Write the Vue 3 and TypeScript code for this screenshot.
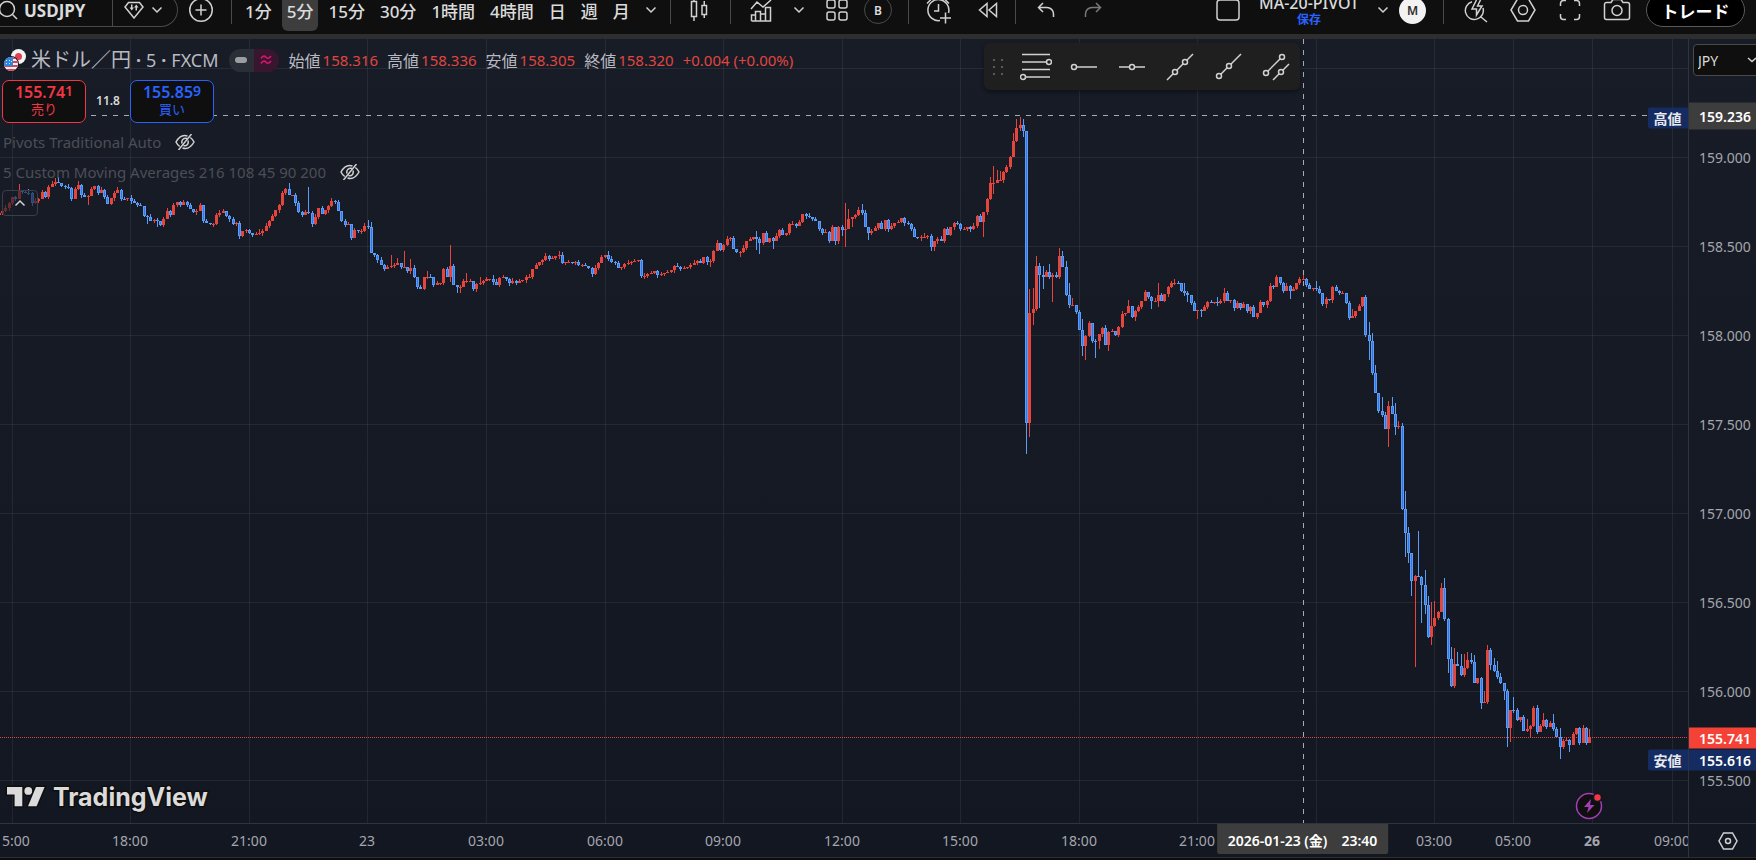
<script setup lang="ts">
import { ref } from 'vue'

interface Block {
  base: number
  bars: string
}

interface Shape {
  upBody: string
  upCore: string
  upWick: string
  downBody: string
  downCore: string
  downWick: string
}

const VIEW_W = 1688
const VIEW_H = 784
const VIEW_TOP = 39
const FIRST_X = 12.5
const STEP = 3.2927

// Each bar is close[^wick top][_wick bottom], counted downwards in thirds of a chart unit.
const blocks: Block[] = [
  {
    base: 510,
    bars: `128 124 114 100 82 86 62^42 66 68 70^58 100 93 86 66 80^64 50 42 36^25 40^22 48 50 54 86 56 46^34 76 80 78_104 56
    48 68 60 82 102 84 68 60 86 88 84 94^74 98 104 108 138 140_163 152 150 154_170 164 146 122 136 106 96 104^94 96^90 106
    118^100 126 122 106 152 160 162 162 136 128^120 122 138 148 162 158 198_208 182 180 190^176 196 192 190^178 182 168
    152 138 120 106 70 56^54 74^40 74 100 126 136 126 128^52 162 140 115 132^108 120 108 92 96 124 152 164 163 204 180
    184 184^176 168 170^150 250^156 256 270 284 298 290 287^255 284 280^264 290 290^243 304 294^266 322 350 356 320
    320^304 322 344 340`,
  },
  {
    base: 600,
    bars: `248 208 230 198^135_245 255 260_278 260_278 244 244^220 244 268 252 250^230 242 238 236 246^225 254 234 230 238 250
    242 250 243 241 230 230 208 194 187 180 167 176 175 168 165^154 190 187 186 187 187 196 194 197 204 222 204 188 171
    165 176^154 186 190 205 200 193 189 185 182 180 227 227_237 221 218 213 226 223 220 216 211 198 200 207 204 200 194
    189 182 188 172 187 184_201 153 130^121 149 135 116 114 146 156 156_170 143 124 116 110 118^94_150 128_162 100 125
    115 122_146 108 90 104 98 73 71 77 66 43 48 52 57 63 88 98 95 122 82 124_134 82 90_108 88^8_140 58^28 50_80 45 30^22
    40^12 80^30 98_120 92 85 70 88 60 88 77 70 65 54 70 72 86 112 114 110 110^98 108 142_152 124_152 116`,
  },
  {
    base: 300,
    bars: `422 386 404 382 370 372 388 388 382 388 377 348 365 336_412 298 250^232 250^198_282 240^210 240^214 216 202 170
    122^98 84^58 76^50 94^56_110 970_1062 638^566_1010 626^565_675 498^468 524_625 530^498_566 516 532^492 524_606 532
    468^445 502^454 584^484 616^550 616^595 636 690 738^658_768 708_780 670 722 724_774 702_746 684 734 695_752 694 704
    682 642 640 618^600 650 634_662 622 604 576 592 602_626 602 586^550_620 602 582 562 550 548^538 550 572 580^548
    586_606 610 634 630_656 632_650 622 606 608 606 610^592 604 578^564 604 600 624 610 624 612 634 622 650 640`,
  },
  {
    base: 750,
    bars: `157 166 154 108 112 82 100 122 108 122_146 116 98 86 86^75 106 118 115 116^92 130 162 148_174 150 112 122 130 130
    158 203 198^178 184 168 140 254 274^216_330 368^250 430^345 484 494^440 536 468^452_590 492^440 530^460_555 528^514
    778 850^724_920 910^832_938`,
  },
  {
    base: 1440,
    bars: `302_348 288_560 290^154 316_428 376^270_402 470^348 438^366_494 414^362 396 324^310 418^294 536_578 618^500 552^504
    558^516 584^522 565^522 540^516 546^518 608^524 595 668_686 667^632 510^494 556_570 572^534 590^544 610^578 634_660
    744_800 690_786 691^652 720 712 752 748^716 738_774 685 756^675 738 720^700 740 730 746^702 772 800^744_836 782 780
    794_816 762 744 788 744 788 772^748`,
  },
]

function buildShape(): Shape {
  const s: Shape = { upBody: '', upCore: '', upWick: '', downBody: '', downCore: '', downWick: '' }
  let index = -4
  let previous = 644
  for (const block of blocks) {
    for (const token of block.bars.trim().split(/\s+/)) {
      const match = /^(\d+)(?:\^(\d+))?(?:_(\d+))?$/.exec(token)
      if (!match) continue
      const close = block.base + Number(match[1])
      const open = previous
      const top = Math.min(open, close)
      const bottom = Math.max(open, close)
      const seed = Math.abs(index * 7) % 5
      const high = match[2] ? block.base + Number(match[2]) : top - seed * 2
      const low = match[3] ? block.base + Number(match[3]) : bottom + ((seed + 2) % 5) * 2
      const x = Math.floor(FIRST_X + index * STEP)
      const y0 = Math.round(top / 3)
      const h = Math.max(1, Math.round(bottom / 3) - y0)
      const w0 = Math.round(Math.min(high, top) / 3)
      const wh = Math.max(1, Math.round(Math.max(low, bottom) / 3) - w0)
      const body = `M${x - 1} ${y0}h3v${h}h-3z`
      const core = h > 2 ? `M${x} ${y0 + 1}h1v${h - 2}h-1z` : ''
      const wick = `M${x} ${w0}h1v${wh}h-1z`
      if (close <= open) {
        s.upBody += body
        s.upCore += core
        s.upWick += wick
      } else {
        s.downBody += body
        s.downCore += core
        s.downWick += wick
      }
      previous = close
      index += 1
    }
  }
  return s
}

const shape = buildShape()

const priceTicks = [
  { label: '159.000', y: 157 },
  { label: '158.500', y: 246 },
  { label: '158.000', y: 335 },
  { label: '157.500', y: 424 },
  { label: '157.000', y: 513 },
  { label: '156.500', y: 602 },
  { label: '156.000', y: 691 },
  { label: '155.500', y: 780 },
]

const timeTicks = [
  { label: '15:00', x: 12, strong: false },
  { label: '18:00', x: 130, strong: false },
  { label: '21:00', x: 249, strong: false },
  { label: '23', x: 367, strong: false },
  { label: '03:00', x: 486, strong: false },
  { label: '06:00', x: 605, strong: false },
  { label: '09:00', x: 723, strong: false },
  { label: '12:00', x: 842, strong: false },
  { label: '15:00', x: 960, strong: false },
  { label: '18:00', x: 1079, strong: false },
  { label: '21:00', x: 1197, strong: false },
  { label: '', x: 1316, strong: false },
  { label: '03:00', x: 1434, strong: false },
  { label: '05:00', x: 1513, strong: false },
  { label: '26', x: 1592, strong: true },
  { label: '09:00', x: 1672, strong: false },
]

const gridPath =
  [68, ...priceTicks.map((t) => t.y)].map((y) => `M0 ${y}.5H${VIEW_W}`).join('') +
  timeTicks.map((t) => `M${t.x}.5 ${VIEW_TOP}V${VIEW_TOP + VIEW_H}`).join('')

const topPct = (y: number): string => `${((y - VIEW_TOP) / VIEW_H) * 100}%`
const leftPct = (x: number): string => `${(x / VIEW_W) * 100}%`

const intervals = ['1分', '5分', '15分', '30分', '1時間', '4時間', '日', '週', '月']
const active = ref('5分')

const ohlc = [
  { name: '始値', value: '158.316' },
  { name: '高値', value: '158.336' },
  { name: '安値', value: '158.305' },
  { name: '終値', value: '158.320' },
]

const indicators = ['Pivots Traditional Auto', '5 Custom Moving Averages 216 108 45 90 200']
const currency = ref('JPY')
</script>

<template>
  <div class="app">
    <header class="toolbar">
      <div class="symbol-pill">
        <button class="symbol" type="button">
          <svg width="18" height="20" viewBox="0 0 18 20" class="ico"><circle cx="7" cy="9" r="7.5" /><path d="M12.500 14.500L17 19" /></svg>
          <span>USDJPY</span>
        </button>
        <button class="gem" type="button" aria-label="ウォッチリスト">
          <svg width="20" height="18" viewBox="0 0 20 18" class="ico"><path d="M4.500 1.500h11L19 6l-9 11L1 6z" /><path class="solid" d="M7 3.500h1.500v3H10L7.750 9.500 5.500 6.500H7zM11.500 9.500H13v-3h1.500L12.250 3.500 10 6.500h1.500z" /></svg>
          <svg width="12" height="8" viewBox="0 0 12 8" class="ico"><path d="M1.500 1.500L6 6l4.500-4.500" /></svg>
        </button>
      </div>
      <button class="plus" type="button" aria-label="追加">
        <svg width="24" height="24" viewBox="0 0 24 24" class="ico"><circle cx="12" cy="12" r="11.250" /><path d="M12 6.500v11M6.500 12h11" /></svg>
      </button>
      <i class="sep"></i>
      <nav class="intervals">
        <button v-for="item in intervals" :key="item" type="button" :class="{ on: item === active }" @click="active = item">{{ item }}</button>
      </nav>
      <button class="chev slim" type="button" aria-label="時間足"><svg width="12" height="8" viewBox="0 0 12 8" class="ico"><path d="M1.500 1.500L6 6l4.500-4.500" /></svg></button>
      <i class="sep"></i>
      <button class="tool" type="button" aria-label="ローソク足">
        <svg width="18" height="26" viewBox="0 0 18 26" class="ico"><path d="M1.500 4.500h5v15h-5zM4 1v3.500M4 19.500V24M12 8.500h4.500v9H12zM14.250 4v4.500M14.250 17.500V21" /></svg>
      </button>
      <i class="sep"></i>
      <button class="tool wide" type="button" aria-label="インジケーター">
        <svg width="24" height="26" viewBox="0 0 24 26" class="ico"><path d="M2.500 24v-6h4v6M6.500 24V14.500h5V24M11.500 24v-7h5v7M16.500 24V10.500h5V24zM2.500 24h14M2 12l6-7 6 5 8-7" /></svg>
      </button>
      <button class="chev" type="button" aria-label="お気に入り"><svg width="12" height="8" viewBox="0 0 12 8" class="ico"><path d="M1.500 1.500L6 6l4.500-4.500" /></svg></button>
      <button class="tool wide" type="button" aria-label="テンプレート">
        <svg width="22" height="22" viewBox="0 0 22 22" class="ico"><rect x="1" y="1" width="8" height="8" rx="2" /><rect x="13" y="1" width="8" height="8" rx="2" /><rect x="1" y="13" width="8" height="8" rx="2" /><rect x="13" y="13" width="8" height="8" rx="2" /></svg>
      </button>
      <button class="badge" type="button">B</button>
      <i class="sep"></i>
      <button class="tool wide" type="button" aria-label="アラート">
        <svg width="28" height="28" viewBox="0 0 28 28" class="ico"><path d="M15 24.500a10.500 10.500 0 1 1 8.500-7.500M13.500 8v7H9M2 7.500l4-4M20 3.500l4 4M20.500 16.500v11M15 22h11" /></svg>
      </button>
      <button class="rewind" type="button" aria-label="リプレイ">
        <svg width="20" height="16" viewBox="0 0 20 16" class="ico"><path d="M9 1.500v13L1.500 8zM18.500 1.500v13L11 8z" /></svg>
      </button>
      <i class="sep"></i>
      <button class="tool wide" type="button" aria-label="元に戻す">
        <svg width="18" height="16" viewBox="0 0 18 16" class="ico"><path d="M6 1L1.500 5.500 6 10M1.500 5.500H10a6.500 6.500 0 0 1 6.500 6.500v3" /></svg>
      </button>
      <button class="redo" type="button" aria-label="やり直す">
        <svg width="18" height="16" viewBox="0 0 18 16" class="ico"><path d="M12 1l4.500 4.500L12 10M16.500 5.500H8A6.500 6.500 0 0 0 1.500 12v3" /></svg>
      </button>
      <span class="spacer"></span>
      <button class="square" type="button" aria-label="レイアウト">
        <svg width="24" height="22" viewBox="0 0 24 22" class="ico"><rect x="1" y="1" width="22" height="20" rx="3" /></svg>
      </button>
      <button class="layout" type="button"><span>MA-20-PIVOT</span><small>保存</small></button>
      <button class="chev" type="button" aria-label="レイアウト管理"><svg width="12" height="8" viewBox="0 0 12 8" class="ico"><path d="M1.500 1.500L6 6l4.500-4.500" /></svg></button>
      <button class="avatar" type="button">M</button>
      <i class="sep"></i>
      <div class="tools-right">
        <button type="button" aria-label="クイック検索">
          <svg width="24" height="26" viewBox="0 0 24 26" class="ico"><path d="M8 4.800a9 9 0 1 0 11 6.200M17 20l6 5M12.500 3L8 12h4.500v6L18 9h-4.500l3-6" /></svg>
        </button>
        <button type="button" aria-label="設定">
          <svg width="26" height="24" viewBox="0 0 26 24" class="ico"><path d="M7.500 1h11L25 12l-6.500 11h-11L1 12z" /><circle cx="13" cy="12" r="4.500" /></svg>
        </button>
        <button type="button" aria-label="全画面">
          <svg width="22" height="22" viewBox="0 0 22 22" class="ico"><path d="M1.500 7V4.500a3 3 0 0 1 3-3H7M15 1.500h2.500a3 3 0 0 1 3 3V7M20.500 15v2.500a3 3 0 0 1-3 3H15M7 20.500H4.500a3 3 0 0 1-3-3V15" /></svg>
        </button>
        <button type="button" aria-label="スナップショット">
          <svg width="28" height="24" viewBox="0 0 28 24" class="ico"><path d="M3.500 4.500H8l2-3h8l2 3h4.500a2 2 0 0 1 2 2v13a2 2 0 0 1-2 2h-21a2 2 0 0 1-2-2v-13a2 2 0 0 1 2-2z" /><circle cx="14" cy="12.500" r="5" /></svg>
        </button>
      </div>
      <button class="trade" type="button">トレード</button>
    </header>

    <main class="workspace">
      <section class="chart">
        <svg class="plot" :viewBox="`0 ${VIEW_TOP} ${VIEW_W} ${VIEW_H}`" preserveAspectRatio="none" aria-hidden="true">
          <path class="grid-lines" :d="gridPath" />
          <path class="price-line" d="M0 737.500H1688" />
          <path class="down" :d="shape.downWick" />
          <path class="up" :d="shape.upWick" />
          <path class="down" :d="shape.downBody" />
          <path class="up" :d="shape.upBody" />
          <path class="down-core" :d="shape.downCore" />
          <path class="up-core" :d="shape.upCore" />
          <path class="cross" stroke-dashoffset="-3" d="M0 115.500H1688" />
          <path class="cross" d="M1303.500 39V823" />
        </svg>

        <div class="legend">
          <div class="title-row">
            <svg class="flags" width="22" height="22" viewBox="0 0 22 22">
              <circle cx="14.500" cy="7.500" r="7.500" fill="#f4f4f6" />
              <circle cx="14.500" cy="7.500" r="3.500" fill="#e0414e" />
              <circle cx="7" cy="15" r="8" fill="#161a25" />
              <clipPath id="us"><circle cx="7" cy="15" r="7" /></clipPath>
              <g clip-path="url(#us)">
                <path fill="#f4f4f6" d="M0 8h14v14H0z" />
                <path fill="#d94452" d="M0 8h14v2H0zM0 12h14v2H0zM0 16h14v2H0zM0 20h14v2H0z" />
                <path fill="#2f86dd" d="M0 8h9v9H0z" />
                <path fill="#cfe4fa" d="M2 11h1v1H2zM5 11h1v1H5zM2 14h1v1H2zM5 14h1v1H5zM7 12h1v1H7z" />
              </g>
            </svg>
            <h1><span class="jp">米ドル／円</span><b class="dot">·</b><span>5</span><b class="dot">·</b><span>FXCM</span></h1>
            <span class="pills">
              <span class="pill-a"><i></i></span>
              <span class="pill-b"><svg width="12" height="12" viewBox="0 0 12 12"><path d="M1 4.500C3 1 5 2 6 3.200s3 1.800 5-1.200M1 9.500C3 6 5 7 6 8.200S9 10 11 7" fill="none" stroke="#d3146c" stroke-width="1.600" /></svg></span>
            </span>
            <dl class="ohlc">
              <div v-for="v in ohlc" :key="v.name"><dt>{{ v.name }}</dt><dd>{{ v.value }}</dd></div>
            </dl>
            <span class="change">+0.004 (+0.00%)</span>
          </div>
          <div class="quotes">
            <button class="sell" type="button"><b>155.74<sup>1</sup></b><span>売り</span></button>
            <span class="spread">11.8</span>
            <button class="buy" type="button"><b>155.85<sup>9</sup></b><span>買い</span></button>
          </div>
          <div v-for="name in indicators" :key="name" class="indicator">
            <span>{{ name }}</span>
            <button type="button" aria-label="表示">
              <svg width="20" height="16" viewBox="0 0 20 16" class="ico"><path d="M12.500 2C8 .5 4 2.500 1 8c1 2 2.200 3.500 3.700 4.500M7.500 14c4.500 1.500 8.500-.5 11.500-6-1-2-2.200-3.500-3.700-4.500M16.500 0L3.500 16M12 4.500C9 3.500 6 6 7 9.500M8.500 11.500c3 1 5.500-1.500 4.500-5" /></svg>
            </button>
          </div>
          <button class="collapse" type="button" aria-label="折りたたむ">
            <svg width="12" height="8" viewBox="0 0 12 8" class="ico"><path d="M1.500 6.500L6 2l4.500 4.500" /></svg>
          </button>
        </div>

        <div class="draw-bar">
          <svg width="12" height="18" viewBox="0 0 12 18" class="grip"><path d="M1 1h2v2H1zM9 1h2v2H9zM1 8h2v2H1zM9 8h2v2H9zM1 15h2v2H1zM9 15h2v2H9z" /></svg>
          <button type="button" aria-label="フィボナッチ"><svg width="32" height="28" viewBox="0 0 32 28" class="ico"><path d="M2 1.500h28M2 9h24.500M2 16.500h28M5.500 24H30" /><circle cx="29" cy="9" r="2.500" /><circle cx="3" cy="24" r="2.500" /></svg></button>
          <button type="button" aria-label="水平レイ"><svg width="28" height="28" viewBox="0 0 28 28" class="ico"><circle cx="4" cy="14" r="2.500" /><path d="M6.500 14H27" /></svg></button>
          <button type="button" aria-label="水平線"><svg width="28" height="28" viewBox="0 0 28 28" class="ico"><circle cx="14" cy="14" r="2.500" /><path d="M1 14h10.500M16.500 14H27" /></svg></button>
          <button type="button" aria-label="延長線"><svg width="28" height="28" viewBox="0 0 28 28" class="ico"><circle cx="9" cy="19" r="2.500" /><circle cx="19" cy="9" r="2.500" /><path d="M1 27l6.200-6.200M10.800 17.200l6.400-6.400M20.800 7.200L27 1" /></svg></button>
          <button type="button" aria-label="レイ"><svg width="28" height="28" viewBox="0 0 28 28" class="ico"><circle cx="5" cy="23" r="2.500" /><circle cx="15" cy="13" r="2.500" /><path d="M6.800 21.200l6.400-6.400M16.800 11.200L27 1" /></svg></button>
          <button type="button" aria-label="平行チャネル"><svg width="28" height="28" viewBox="0 0 28 28" class="ico"><circle cx="4" cy="20" r="2.500" /><circle cx="20" cy="4" r="2.500" /><circle cx="19" cy="19" r="2.500" /><path d="M5.800 18.200L18.200 5.800M11 27l6.200-6.200M20.800 17.200L27 11" /></svg></button>
        </div>

        <div class="brand">
          <svg width="38" height="20" viewBox="0 0 38 20"><path d="M0 0h15.300v19.300H7.600V7.600H0z" /><circle cx="21.300" cy="3.900" r="3.900" /><path d="M29 0h8.600l-8 19.300H21z" /></svg>
          <span>TradingView</span>
        </div>

        <span class="level-tag" :style="{ top: topPct(117.5) }">高値</span>
        <span class="level-tag" :style="{ top: topPct(759.5) }">安値</span>

        <button class="news" type="button" aria-label="ニュース" :style="{ left: leftPct(1589), top: topPct(806) }">
          <svg width="28" height="28" viewBox="0 0 28 28"><circle cx="14" cy="14" r="12.500" fill="#0f0f0f" stroke="#a63db8" stroke-width="1.500" /><path d="M16 7l-7 8h4.500L12 21l7.500-8H15z" fill="#a63db8" /><circle cx="22.500" cy="5.500" r="5" fill="#131722" /><circle cx="22.500" cy="5.500" r="3.200" fill="#f23645" /></svg>
        </button>
      </section>

      <aside class="price-axis">
        <div class="currency">
          <select v-model="currency" aria-label="通貨"><option>JPY</option><option>USD</option></select>
          <svg width="12" height="8" viewBox="0 0 12 8" class="ico"><path d="M2 2l4 3.500L10 2" /></svg>
        </div>
        <span v-for="t in priceTicks" :key="t.label" class="tick" :style="{ top: topPct(t.y) }">{{ t.label }}</span>
        <span class="tick mark cursor" :style="{ top: topPct(115.5) }">159.236</span>
        <span class="tick mark low" :style="{ top: topPct(759.5) }">155.616</span>
        <span class="tick mark last" :style="{ top: topPct(737.5) }">155.741</span>
      </aside>

      <div class="time-axis">
        <span v-for="t in timeTicks" :key="t.x" class="time" :class="{ strong: t.strong }" :style="{ left: leftPct(t.x) }">{{ t.label }}</span>
        <span class="cursor-time" :style="{ left: leftPct(1302.5) }"><span>2026-01-23 (金)</span><span>23:40</span></span>
      </div>

      <button class="axis-settings" type="button" aria-label="スケール設定">
        <svg width="20" height="18" viewBox="0 0 20 18" class="ico"><path d="M5.500 1h9L19 9l-4.500 8h-9L1 9z" /><circle cx="10" cy="9" r="2.500" /></svg>
      </button>
    </main>
  </div>
</template>

<style>
html,
body {
  margin: 0;
  background: #0c0c0d;
}
</style>

<style scoped>
.app {
  display: flex;
  flex-direction: column;
  height: 100vh;
  min-height: 480px;
  overflow: hidden;
  box-sizing: border-box;
  border-bottom: 2px solid #0c0c0d;
  color: #dbdbdb;
  font-family: "Noto Sans", "Noto Sans CJK JP", sans-serif;
  font-size: 15px;
}
.app * {
  box-sizing: border-box;
}
button {
  display: flex;
  align-items: center;
  justify-content: center;
  flex: none;
  margin: 0;
  padding: 0;
  border: 0;
  background: none;
  color: inherit;
  font: inherit;
  white-space: nowrap;
  cursor: pointer;
}
svg {
  display: block;
  flex: none;
}
.ico {
  fill: none;
  stroke: #d1d1d1;
  stroke-width: 1.5;
}
.solid {
  fill: #d1d1d1;
  stroke: none;
}

.toolbar {
  display: flex;
  align-items: center;
  flex: none;
  height: 39px;
  padding-bottom: 14px;
  overflow: hidden;
  background: #0f0f0f;
  border-bottom: 5px solid #2e2e2e;
}
.symbol-pill {
  display: flex;
  flex: none;
  height: 34px;
  width: 178px;
  border: 1px solid #4a4a4a;
  border-left: 0;
  border-radius: 0 17px 17px 0;
}
.symbol {
  width: 113px;
  justify-content: flex-start;
  gap: 6px;
  border-right: 1px solid #4a4a4a;
  font-size: 17px;
  font-weight: 700;
}
.gem {
  flex: 1;
  gap: 7px;
  padding-right: 3px;
}
.plus {
  width: 38px;
  margin-left: 4px;
}
.sep {
  flex: none;
  width: 1px;
  height: 28px;
  background: #4a4a4a;
  margin: 0 8px 0 11px;
}
.intervals {
  display: flex;
  flex: none;
  align-items: center;
  gap: 5px;
}
.intervals button {
  height: 42px;
  padding: 0 5px;
  border-radius: 6px;
  font-size: 17px;
  font-weight: 500;
}
.intervals .on {
  background: #3d3d3d;
}
.chev {
  width: 32px;
}
.slim {
  width: 16px;
  margin-left: 8px;
}
.tool {
  width: 40px;
}
.wide {
  width: 44px;
}
.badge {
  width: 28px;
  height: 28px;
  margin: 0 5px;
  border: 1px solid #4a4a4a;
  border-radius: 50%;
  font-size: 12px;
  font-weight: 600;
}
.rewind {
  width: 32px;
  margin-left: 11px;
}
.redo {
  width: 46px;
  margin-left: 2px;
  opacity: 0.55;
}
.spacer {
  flex: 1;
}
.square {
  width: 36px;
}
.layout {
  flex-direction: column;
  width: 110px;
  margin: 0 3px 0 8px;
  font-size: 16px;
  font-weight: 500;
  line-height: 20px;
}
.layout small {
  color: #2962ff;
  font-size: 12px;
  font-weight: 700;
  line-height: 14px;
}
.avatar {
  width: 27px;
  height: 27px;
  margin-right: 6px;
  border-radius: 50%;
  background: #f2f2f2;
  color: #2e2e2e;
  font-size: 12px;
  font-weight: 600;
}
.tools-right {
  display: flex;
  flex: none;
  margin-right: 6px;
}
.tools-right button {
  width: 47px;
}
.trade {
  width: 99px;
  height: 34px;
  margin-right: 11px;
  border: 1px solid #5a5a5a;
  border-radius: 17px;
  background: #000;
  color: #fff;
  font-size: 17px;
  font-weight: 700;
}

.workspace {
  display: grid;
  grid-template: minmax(0, 1fr) 34px / minmax(0, 1fr) 68px;
  flex: 1;
  min-height: 0;
  background: linear-gradient(#181c27, #131722);
  border-bottom: 1px solid #2e2e2e;
}
.chart {
  position: relative;
  min-width: 0;
  overflow: hidden;
}
.plot {
  position: absolute;
  inset: 0;
  width: 100%;
  height: 100%;
}
.grid-lines {
  fill: none;
  stroke: #f0f3fa;
  stroke-opacity: 0.07;
}
.up {
  fill: #e8443c;
}
.up-core {
  fill: #d84a42;
}
.down {
  fill: #5b9cf6;
}
.down-core {
  fill: #3577e8;
}
.price-line {
  stroke: #d84a46;
  stroke-dasharray: 1 1;
}
.cross {
  fill: none;
  stroke: #a9abb2;
  stroke-dasharray: 5 6;
}

.legend {
  position: relative;
  display: flex;
  flex-direction: column;
  align-items: flex-start;
  padding: 6px 0 0 2px;
}
.title-row {
  display: flex;
  align-items: center;
  height: 30px;
}
.flags {
  margin: 0 5px 0 2px;
}
h1 {
  display: flex;
  align-items: center;
  gap: 5px;
  margin: 0;
  color: #b8bac1;
  font-size: 18px;
  font-weight: 400;
  line-height: 28px;
  white-space: nowrap;
}
.jp {
  font-size: 20px;
}
.dot {
  width: 5px;
  text-align: center;
  font-weight: 700;
}
.pills {
  display: flex;
  height: 23px;
  margin: 0 10px;
  border-radius: 12px;
  overflow: hidden;
}
.pill-a,
.pill-b {
  display: flex;
  align-items: center;
  justify-content: center;
  width: 25px;
}
.pill-a {
  background: #2a2e37;
}
.pill-a i {
  width: 12px;
  height: 6px;
  border-radius: 3px;
  background: #9b9da3;
}
.pill-b {
  background: #38162f;
}
.ohlc {
  display: flex;
  gap: 9px;
  margin: 0;
  white-space: nowrap;
}
.ohlc div {
  display: flex;
  align-items: center;
  gap: 2px;
}
.ohlc dt {
  color: #b8bac1;
  font-size: 16px;
}
.ohlc dd,
.change {
  margin: 0;
  color: #e0463f;
}
.change {
  margin-left: 9px;
  white-space: nowrap;
}
.quotes {
  display: flex;
  align-items: center;
  height: 43px;
  margin-top: 5px;
}
.sell,
.buy {
  flex-direction: column;
  width: 84px;
  height: 43px;
  padding-bottom: 2px;
  border: 1px solid;
  border-radius: 7px;
  background: #0f0f0f;
  line-height: 17px;
}
.sell {
  color: #f23645;
}
.buy {
  color: #2962ff;
}
.quotes b {
  font-size: 16px;
  font-weight: 600;
}
.quotes sup {
  font-size: 14px;
  line-height: 1;
  vertical-align: 2px;
}
.quotes button span {
  font-size: 13px;
}
.spread {
  width: 44px;
  padding-bottom: 2px;
  text-align: center;
  font-size: 12px;
  font-weight: 600;
}
.indicator {
  display: flex;
  align-items: center;
  gap: 14px;
  height: 30px;
  padding-left: 1px;
  color: #4c4e55;
  white-space: nowrap;
}
.quotes + .indicator {
  margin-top: 4px;
}
.collapse {
  width: 36px;
  height: 26px;
  margin-top: 3px;
  border: 1px solid #3c3e45;
  border-radius: 4px;
  background: rgb(24 28 39 / 60%);
}

.draw-bar {
  position: absolute;
  top: 4px;
  right: 388px;
  display: flex;
  align-items: center;
  height: 47px;
  padding-left: 8px;
  border-radius: 6px;
  background: #1f1f1f;
  box-shadow: 0 2px 4px rgb(0 0 0 / 40%);
}
.grip {
  margin-right: 8px;
  fill: #5a5a5a;
}
.draw-bar button {
  width: 48px;
  height: 40px;
}

.brand {
  position: absolute;
  left: 7px;
  bottom: 10px;
  display: flex;
  align-items: center;
  gap: 8px;
  color: #dbdbdb;
  font-family: Inter, "Noto Sans", sans-serif;
  font-size: 25px;
  font-weight: 700;
  line-height: 32px;
}
.brand svg {
  overflow: visible;
  fill: #dbdbdb;
  stroke: #0f0f0f;
  stroke-width: 3;
  paint-order: stroke;
}
.brand span {
  -webkit-text-stroke: 3px #0f0f0f;
  paint-order: stroke fill;
}
.level-tag {
  position: absolute;
  right: 0;
  width: 40px;
  padding-right: 1px;
  border-radius: 2px 0 0 2px;
  background: #142c61;
  color: #e8e9ec;
  font-size: 14px;
  font-weight: 700;
  line-height: 21px;
  text-align: center;
  transform: translateY(-50%);
}
.news {
  position: absolute;
  transform: translate(-50%, -50%);
}

.price-axis {
  position: relative;
  border-left: 1px solid #2f333d;
  overflow: hidden;
}
.currency {
  position: relative;
  display: flex;
  align-items: center;
  width: 72px;
  height: 32px;
  margin: 5px 0 0 4px;
  border: 1px solid #4a4a4a;
  border-radius: 4px;
  background: #0f0f0f;
}
.currency select {
  width: 100%;
  height: 100%;
  padding: 0 4px;
  border: 0;
  background: none;
  appearance: none;
  color: #dbdbdb;
  font: inherit;
  font-size: 14px;
}
.currency svg {
  position: absolute;
  left: 52px;
  pointer-events: none;
}
.tick {
  position: absolute;
  left: 0;
  right: 0;
  padding-left: 10px;
  color: #a4a6ad;
  font-size: 14px;
  line-height: 21px;
  transform: translateY(-50%);
}
.mark {
  color: #fff;
  font-weight: 600;
}
.cursor {
  background: #3d3d3d;
  line-height: 27px;
}
.low {
  background: #142c61;
}
.last {
  background: #f44336;
}
.time-axis {
  position: relative;
  border-top: 1px solid #2f333d;
  overflow: hidden;
}
.time {
  position: absolute;
  top: 7px;
  color: #a4a6ad;
  font-size: 14px;
  line-height: 20px;
  transform: translateX(-50%);
}
.strong {
  font-weight: 700;
}
.cursor-time {
  position: absolute;
  top: 0;
  display: flex;
  gap: 14px;
  padding: 7px 11px 3px;
  border-radius: 0 0 2px 2px;
  background: #3d3d3d;
  color: #fff;
  font-size: 14px;
  font-weight: 600;
  line-height: 20px;
  white-space: nowrap;
  transform: translateX(-50%);
}
.axis-settings {
  border-top: 1px solid #2f333d;
  border-left: 1px solid #2f333d;
  padding-left: 10px;
}
</style>
